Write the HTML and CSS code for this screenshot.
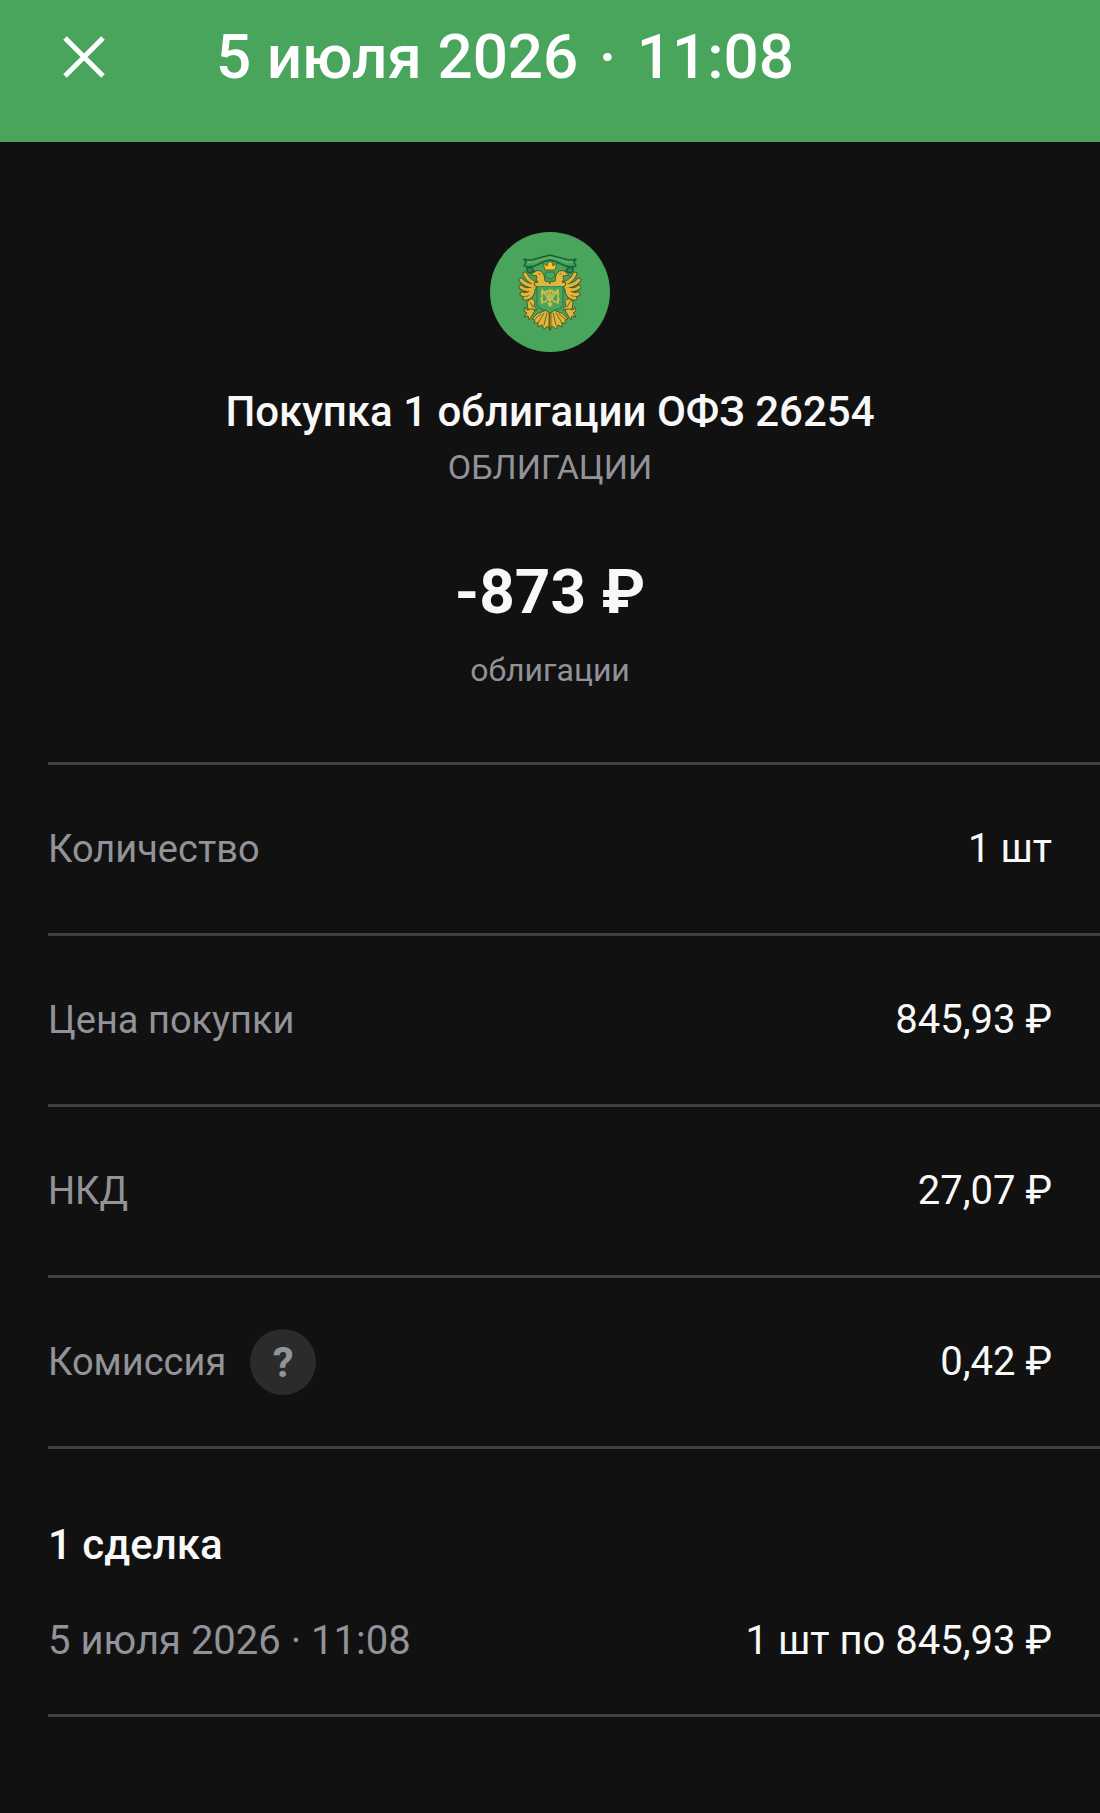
FILE: index.html
```
<!DOCTYPE html>
<html lang="ru">
<head>
  <meta charset="UTF-8">
  <meta name="viewport" content="width=device-width, initial-scale=1.0">
  <title>Покупка облигации</title>
  <link rel="stylesheet" href="styles.css">
</head>
<body>
  <header class="header">
    <button class="close" type="button" aria-label="Закрыть">
      <svg width="42" height="42" viewBox="0 0 42 42" fill="none" stroke="currentColor" stroke-width="5">
        <path d="M2 2 40 40M40 2 2 40"/>
      </svg>
    </button>
    <h1 class="date">5 июля 2026 <span class="dot">·</span> 11:08</h1>
  </header>

  <main>
    <section class="summary">
      <svg class="logo" viewBox="0 0 120 120" aria-hidden="true">
        <circle cx="60" cy="60" r="60" fill="#49a45c"/>
        <!-- ribbon -->
        <path d="M34 27q6 2 11 0 8-2 15-4 7 2 15 4 5 2 11 0l-2 3 2 4q-7 2-13-1-7-4-13-5-6 1-13 5-6 3-13 1l2-4z" fill="#43a05b" stroke="#17633a" stroke-width="1.5" stroke-linejoin="round"/>
        <path d="M38 30q5 1 9-1 7-3 13-3 6 0 13 3 4 2 9 1" fill="none" stroke="#8fc063" stroke-width="1.5" stroke-dasharray="1 1"/>
        <path d="M37 35q-1 5 3 6l4-2-2-3zM83 35q1 5-3 6l-4-2 2-3z" fill="#2f8a50" stroke="#17633a" stroke-width="1.5"/>
        <!-- left half of the eagle, mirrored below -->
        <g id="half" stroke-linecap="round" stroke-linejoin="round">
          <g fill="none" stroke="#4f5a22" stroke-width="5">
            <path d="M47 52q-8-2-12-10M45 54q-9 0-14-6M44 56q-8 4-13-1M43 58q-5 6-11 4M43 60q-3 7-8 6"/>
          </g>
          <g fill="none" stroke="#dfb63b" stroke-width="3">
            <path d="M47 52q-8-2-12-10M45 54q-9 0-14-6M44 56q-8 4-13-1M43 58q-5 6-11 4M43 60q-3 7-8 6"/>
          </g>
          <g fill="#dfb63b" stroke="#4f5a22" stroke-width="1">
            <path d="M60 52v-2l-5-1q0-7-4-10-4-2-8 2l-2 2 6 1q-2 4 1 6l-4 1 1 3h15z"/>
            <path d="M40 67q4-1 5 3l-1 4 3 4-4 1-5-2-1-6z"/>
            <path d="M41 77l-4 1-2-3-1 4 3 2-3 4 4-1 1 4 4-6 2-4z"/>
            <path d="M60 77l-6 2q-7 1-12 8l3 1-1 3 4 0 0 4 4-2 2 4 4-3 2 4z"/>
          </g>
          <path d="M49 42h1M40 70l3 5M59 80v17M57 81l-3 12M54 81l-6 10M51 82l-6 5" fill="none" stroke="#6c6423" stroke-width="1"/>
        </g>
        <use href="#half" transform="matrix(-1 0 0 1 120 0)"/>
        <!-- crown -->
        <path d="M55 38l-2-7 4 3 1-4h4l1 4 4-3-2 7z" fill="#f1c637" stroke="#6b6020" stroke-width="1"/>
        <path d="M56 40h8l1 4q-5 6-10 0z" fill="#49a45c" stroke="#2a7443" stroke-width="1"/>
        <!-- shield with monogram -->
        <path d="M47 54h26v20q-3 4-8 4l-5 3-5-3q-5 0-8-4z" fill="#49a45c" stroke="#2a7443" stroke-width="1"/>
        <path d="M46 53h28" stroke="#dfb63b" stroke-width="2"/>
        <g fill="none" stroke="#d8c045" stroke-width="1.4">
          <path d="M52 57v15M68 57v15M52 58l8 11 8-11M60 57v16M56 59h8M58 71l2 3 2-3"/>
          <path d="M51 62q5-4 7 0 1 6-3 8-4 0-4-4M69 62q-5-4-7 0-1 6 3 8 4 0 4-4"/>
        </g>
      </svg>
      <h2 class="title">Покупка 1 облигации ОФЗ 26254</h2>
      <p class="type">ОБЛИГАЦИИ</p>
      <p class="amount">-873 ₽</p>
      <p class="note">облигации</p>
    </section>

    <dl class="details">
      <div class="row">
        <dt>Количество</dt>
        <dd>1 шт</dd>
      </div>
      <div class="row">
        <dt>Цена покупки</dt>
        <dd>845,93 ₽</dd>
      </div>
      <div class="row">
        <dt>НКД</dt>
        <dd>27,07 ₽</dd>
      </div>
      <div class="row">
        <dt>Комиссия <button class="help" type="button">?</button></dt>
        <dd>0,42 ₽</dd>
      </div>
    </dl>

    <section class="deals">
      <h2 class="deals-title">1 сделка</h2>
      <div class="deal">
        <span class="deal-date">5 июля 2026 · 11:08</span>
        <span>1 шт по 845,93 ₽</span>
      </div>
    </section>
  </main>
</body>
</html>
```
FILE: styles.css
```
*{
  padding: 0;
  margin: 0;
  box-sizing: border-box;
}
:root{
  --green: #49a45c;
  --bg: #111111;
  --line: #414141;
  --text: #f8f8f8;
  --muted: #929398;
}
body{
  background-color: var(--bg);
  color: var(--text);
  font-family: Roboto, "Noto Sans", sans-serif;
  font-size: 40px;
  line-height: 66px;
}
button{
  border: none;
  cursor: pointer;
  font-family: inherit;
}
.header{
  display: flex;
  align-items: center;
  gap: 96px;
  padding: 21px 48px 49px;
  background-color: var(--green);
  color: white;
}
.close{
  display: flex;
  justify-content: center;
  align-items: center;
  width: 72px;
  height: 72px;
  background: none;
  color: inherit;
}
.date{
  font-size: 62px;
  line-height: 72px;
  font-weight: 500;
}
.dot{
  padding: 0 5px;
}
.summary{
  display: flex;
  flex-direction: column;
  align-items: center;
  padding: 90px 48px 67px;
  text-align: center;
}
.logo{
  width: 120px;
  height: 120px;
}
.title{
  margin-top: 30px;
  font-size: 42px;
  line-height: 60px;
  font-weight: 500;
}
.type,
.note{
  color: var(--muted);
  font-size: 34px;
  line-height: 50px;
}
.note{
  font-size: 32px;
}
.amount{
  margin-top: 60px;
  margin-bottom: 13px;
  font-size: 62px;
  line-height: 80px;
  font-weight: 700;
}
.details{
  margin-left: 48px;
}
.row{
  display: flex;
  justify-content: space-between;
  padding: 51px 48px 51px 0;
  border-top: 3px solid var(--line);
}
dt{
  display: flex;
  align-items: center;
  gap: 24px;
  color: var(--muted);
  font-size: 38px;
}
.help{
  width: 66px;
  height: 66px;
  border-radius: 50%;
  background-color: #2b2b2b;
  color: var(--muted);
  font-size: 42px;
  font-weight: 700;
}
.deals{
  margin-left: 48px;
  padding: 66px 48px 40px 0;
  border-top: 3px solid var(--line);
  border-bottom: 3px solid var(--line);
}
.deals-title{
  font-size: 42px;
  line-height: 60px;
  font-weight: 500;
}
.deal{
  display: flex;
  justify-content: space-between;
  margin-top: 33px;
}
.deal-date{
  color: var(--muted);
}
```
